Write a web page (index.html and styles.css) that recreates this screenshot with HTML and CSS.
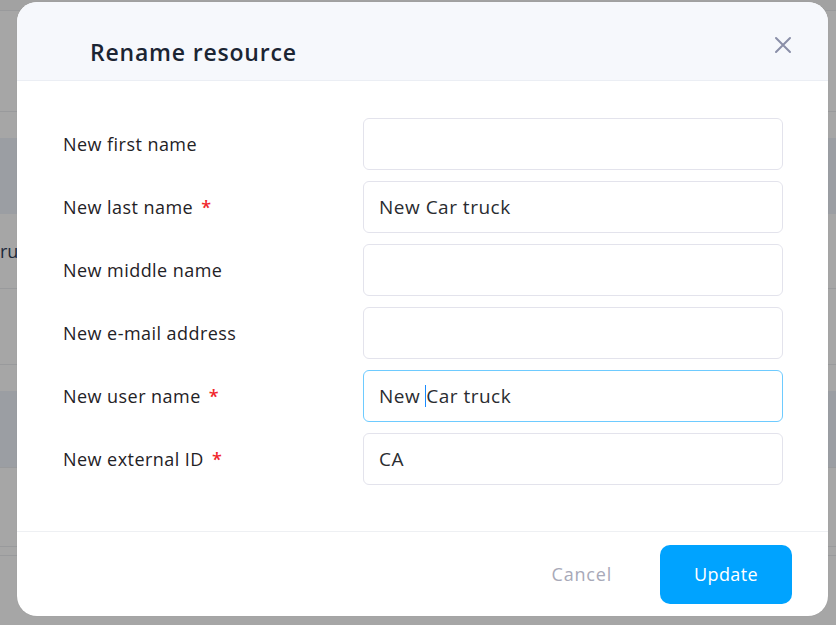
FILE: index.html
```html
<!DOCTYPE html>
<html lang="en">
<head>
<meta charset="utf-8">
<title>Rename resource</title>
<link rel="stylesheet" href="styles.css">
</head>
<body>
<div class="backdrop">
  <div class="bg-row r1"></div>
  <div class="bg-row r2"></div>
  <div class="bg-row r3"></div>
  <div class="bg-row band r4"></div>
  <div class="bg-row r5"><span class="bg-text">ru</span></div>
  <div class="bg-row r6"></div>
  <div class="bg-row r7"></div>
  <div class="bg-row band r8"></div>
  <div class="bg-row r9"></div>
  <div class="bg-row r10"></div>
  <div class="bg-row r11"></div>
</div>

<div class="modal">
  <div class="modal-header">
    <h2 class="modal-title">Rename resource</h2>
    <button class="close-btn" aria-label="Close">
      <svg width="18" height="18" viewBox="0 0 18 18"><path d="M2 2L16 16M16 2L2 16" stroke="#8a8fa8" stroke-width="2" stroke-linecap="round"/></svg>
    </button>
  </div>
  <div class="modal-body">
    <label class="label">New first name</label>
    <div class="input"></div>
    <label class="label">New last name <span class="req">*</span></label>
    <div class="input">New Car truck</div>
    <label class="label">New middle name</label>
    <div class="input"></div>
    <label class="label">New e-mail address</label>
    <div class="input"></div>
    <label class="label">New user name <span class="req">*</span></label>
    <div class="input focused">New <span class="caret"></span>Car truck</div>
    <label class="label">New external ID <span class="req">*</span></label>
    <div class="input">CA</div>
  </div>
  <div class="modal-footer">
    <button class="btn-cancel">Cancel</button>
    <button class="btn-update">Update</button>
  </div>
</div>
</body>
</html>
```

FILE: styles.css
```css
html, body {
  margin: 0;
  padding: 0;
}
body {
  width: 836px;
  height: 625px;
  overflow: hidden;
  background: #a6a6a6;
  font-family: "Open Sans", "DejaVu Sans", sans-serif;
  position: relative;
}
.backdrop {
  display: flex;
  flex-direction: column;
}
.bg-row {
  border-bottom: 1px solid #999a9c;
  background: #a6a6a6;
}
.band { background: #9b9ea3; }
.r1 { height: 10px; background: #a2a2a2; }
.r2 { height: 100px; }
.r3 { height: 26px; border-bottom: none; }
.r4 { height: 76px; border-bottom: none; }
.r5 { height: 74px; display: flex; align-items: center; }
.r6 { height: 75px; }
.r7 { height: 26px; border-bottom: none; }
.r8 { height: 76px; }
.r9 { height: 78px; }
.r10 { height: 8px; }
.r11 { height: 80px; border-bottom: none; }
.bg-text {
  font-size: 18px;
  color: #1c2a3a;
  margin-left: 0;
}

.modal {
  position: absolute;
  left: 17px;
  top: 2px;
  width: 811px;
  height: 614px;
  background: #fff;
  border-radius: 20px;
  overflow: hidden;
  display: flex;
  flex-direction: column;
  box-shadow: 0 0 1px rgba(0,0,0,0.15);
}
.modal-header {
  height: 79px;
  background: #f6f8fc;
  border-bottom: 1px solid #ebeef4;
  display: flex;
  align-items: center;
  justify-content: space-between;
  padding: 0 36px 0 73px;
  box-sizing: border-box;
  flex: none;
}
.modal-title {
  margin: 0;
  font-size: 23px;
  letter-spacing: 0.8px;
  font-weight: 600;
  color: #1b2533;
  padding-top: 22px;
}
.close-btn {
  border: none;
  background: none;
  padding: 0;
  width: 18px;
  height: 18px;
  display: flex;
  cursor: pointer;
  margin-top: 8px;
}
.modal-body {
  flex: 1;
  display: grid;
  grid-template-columns: 300px 420px;
  grid-auto-rows: 52px;
  row-gap: 11px;
  align-items: center;
  padding: 37px 45px 0 46px;
  align-content: start;
}
.label {
  font-size: 18px;
  letter-spacing: 0.45px;
  color: #1f2226;
}
.req {
  color: #f0262b;
  font-weight: 600;
  margin-left: 3px;
}
.input {
  height: 52px;
  box-sizing: border-box;
  border: 1px solid #e3e3ec;
  border-radius: 6px;
  padding: 0 15px;
  display: flex;
  align-items: center;
  font-size: 19px;
  letter-spacing: 0.5px;
  color: #2a2c30;
}
.input.focused {
  border-color: #6ecbff;
}
.caret {
  display: inline-block;
  width: 1px;
  height: 22px;
  background: #1a8cff;
  margin-left: 5px;
}
.modal-footer {
  height: 84px;
  flex: none;
  border-top: 1px solid #eef0f3;
  display: flex;
  align-items: center;
  justify-content: flex-end;
  padding-right: 36px;
  gap: 48px;
}
.btn-cancel {
  border: none;
  background: none;
  font-family: inherit;
  font-size: 18px;
  letter-spacing: 0.8px;
  color: #a8a9b8;
  padding: 0;
  cursor: pointer;
}
.btn-update {
  width: 132px;
  height: 59px;
  border: none;
  border-radius: 10px;
  background: #00a3ff;
  color: #fff;
  font-family: inherit;
  font-size: 18px;
  letter-spacing: 0.4px;
  font-weight: 500;
  cursor: pointer;
}
```
